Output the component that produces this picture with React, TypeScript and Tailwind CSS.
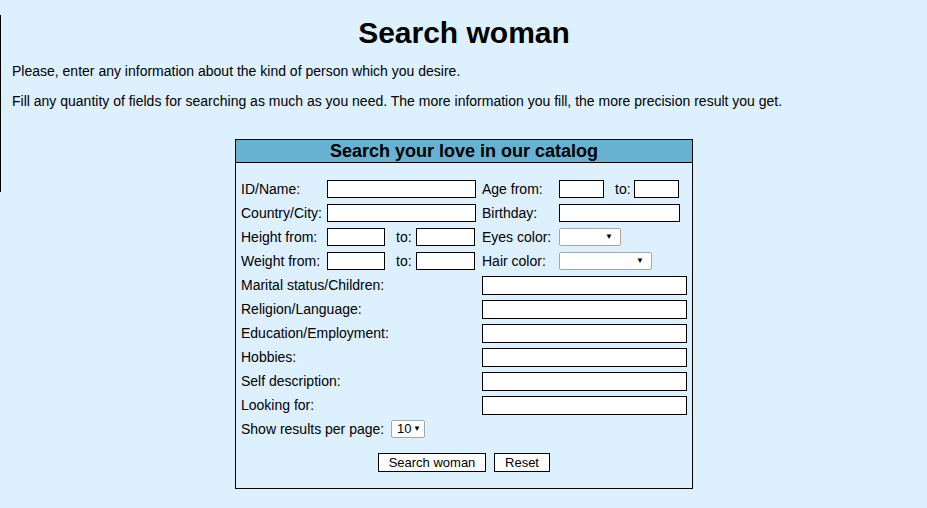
const font = { fontFamily: '"Liberation Sans", Arial, sans-serif' };

function TextBox({ w, h = "h-[18px]" }: { w: string; h?: string }) {
  return <div className={`${w} ${h} shrink-0 border border-black bg-white`} />;
}

function Select({ w, value, pr = "pr-[7px]" }: { w: string; value?: string; pr?: string }) {
  return (
    <div
      className={`${w} ${pr} flex h-[18px] shrink-0 items-center justify-between rounded-[2px] border border-[#a6a6a6] bg-white pl-[5px] text-[13px]`}
    >
      <span>{value}</span>
      <span className="text-[8px] leading-none">▼</span>
    </div>
  );
}

function Row({ children }: { children: React.ReactNode }) {
  return <div className="flex h-6 items-center">{children}</div>;
}

function LongRow({ label }: { label: string }) {
  return (
    <Row>
      <span className="w-[241px] shrink-0">{label}</span>
      <TextBox w="w-[205px]" h="h-[19px]" />
    </Row>
  );
}

export default function App() {
  return (
    <div className="flex min-h-[508px] bg-[#ddf0fe] text-black" style={font}>
      <div className="mt-[15px] h-[177px] w-px shrink-0 bg-black" />
      <div className="flex-1">
        <h1 className="mt-[15px] text-center text-[30px] font-bold leading-[36px]">Search woman</h1>
        <p className="mt-[12px] pl-[11px] text-[14px] leading-[16px]">
          Please, enter any information about the kind of person which you desire.
        </p>
        <p className="mt-[14px] pl-[11px] text-[14px] leading-[16px]">
          Fill any quantity of fields for searching as much as you need. The more information you fill, the more
          precision result you get.
        </p>

        <div className="mx-auto mt-[30px] w-[458px] border border-black text-[14px]">
          <div className="flex h-[23px] items-center justify-center border-b border-black bg-[#67b2d1] text-[18px] font-bold">
            Search your love in our catalog
          </div>
          <div className="pb-[14px] pl-[5px] pt-[14px]">
            <Row>
              <span className="w-[86px] shrink-0">ID/Name:</span>
              <TextBox w="w-[149px]" />
              <span className="ml-[6px] w-[77px] shrink-0">Age from:</span>
              <TextBox w="w-[45px]" />
              <span className="ml-[11px] w-[19px] shrink-0">to:</span>
              <TextBox w="w-[45px]" />
            </Row>
            <Row>
              <span className="w-[86px] shrink-0">Country/City:</span>
              <TextBox w="w-[149px]" />
              <span className="ml-[6px] w-[77px] shrink-0">Birthday:</span>
              <TextBox w="w-[121px]" />
            </Row>
            <Row>
              <span className="w-[86px] shrink-0">Height from:</span>
              <TextBox w="w-[58px]" />
              <span className="ml-[11px] w-[20px] shrink-0">to:</span>
              <TextBox w="w-[59px]" />
              <span className="ml-[7px] w-[77px] shrink-0">Eyes color:</span>
              <Select w="w-[62px]" />
            </Row>
            <Row>
              <span className="w-[86px] shrink-0">Weight from:</span>
              <TextBox w="w-[58px]" />
              <span className="ml-[11px] w-[20px] shrink-0">to:</span>
              <TextBox w="w-[59px]" />
              <span className="ml-[7px] w-[77px] shrink-0">Hair color:</span>
              <Select w="w-[93px]" />
            </Row>
            <LongRow label="Marital status/Children:" />
            <LongRow label="Religion/Language:" />
            <LongRow label="Education/Employment:" />
            <LongRow label="Hobbies:" />
            <LongRow label="Self description:" />
            <LongRow label="Looking for:" />
            <Row>
              <span className="w-[150px] shrink-0">Show results per page:</span>
              <Select w="w-[34px]" value="10" pr="pr-[3px]" />
            </Row>
            <div className="mt-[9px] flex h-6 items-center justify-center gap-2 pr-[5px]">
              <button className="h-[19px] w-[108px] border border-black bg-white text-[13px] leading-none">
                Search woman
              </button>
              <button className="h-[19px] w-[56px] border border-black bg-white text-[13px] leading-none">
                Reset
              </button>
            </div>
          </div>
        </div>
      </div>
    </div>
  );
}
